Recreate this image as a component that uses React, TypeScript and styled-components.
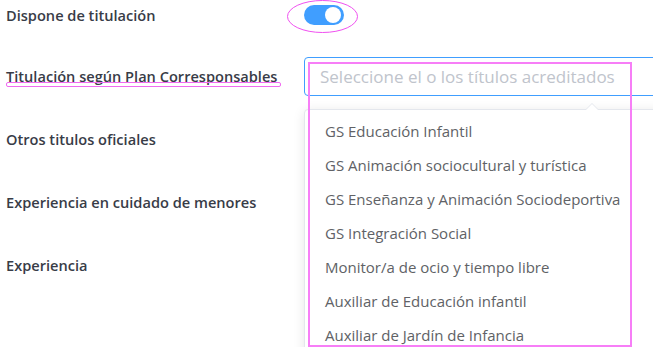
import React from "react";
import styled, { createGlobalStyle } from "styled-components";

const Global = createGlobalStyle`
  html, body { margin: 0; padding: 0; overflow: hidden; background: #fff; }
  body { font-family: "Open Sans", "Liberation Sans", sans-serif; }
`;

const Page = styled.div`
  position: relative;
  width: 653px;
  height: 347px;
  overflow: hidden;
  padding-left: 6px;
  box-sizing: border-box;
`;

const Row = styled.div<{ $compact?: boolean }>`
  display: grid;
  grid-template-columns: 298px 1fr;
  align-items: center;
  height: ${(p) => (p.$compact ? 30 : 40)}px;
  margin-bottom: ${(p) => (p.$compact ? 26 : 23)}px;
`;

const Label = styled.span`
  position: relative;
  justify-self: start;
  font-size: 14.6px;
  line-height: 20px;
  font-weight: 600;
  letter-spacing: 0;
  color: #383c47;
  white-space: nowrap;
`;

const Underline = styled.span`
  position: absolute;
  left: 0;
  right: -4px;
  bottom: -1px;
  height: 3px;
  border: 1px solid #f06af0;
  border-radius: 2px;
`;

const Control = styled.div`
  position: relative;
  height: 100%;
  display: flex;
  align-items: center;
`;

const Switch = styled.span`
  position: relative;
  width: 40px;
  height: 20px;
  border-radius: 10px;
  background: #409eff;
`;

const Knob = styled.span`
  position: absolute;
  top: 2px;
  right: 3px;
  width: 16px;
  height: 16px;
  border-radius: 50%;
  background: #fff;
`;

const Ellipse = styled.svg`
  position: absolute;
  left: -17px;
  top: 0;
  overflow: visible;
`;

const Select = styled.div`
  position: relative;
  width: 576px;
  height: 39px;
  box-sizing: border-box;
  border: 1px solid #409eff;
  border-radius: 4px;
  display: flex;
  align-items: center;
  padding-left: 15px;
  font-size: 17px;
  color: #c0c4cc;
  white-space: nowrap;
`;

const Dropdown = styled.ul`
  position: absolute;
  top: 51px;
  left: -1px;
  width: 576px;
  margin: 0;
  padding: 4px 0 6px;
  list-style: none;
  background: #fff;
  border: 1px solid #e4e7ed;
  border-radius: 4px;
  box-shadow: 0 2px 12px 0 rgba(0, 0, 0, 0.1);
  box-sizing: border-box;
  z-index: 2;
`;

const Arrow = styled.span`
  position: absolute;
  top: -7px;
  left: 281px;
  width: 0;
  height: 0;
  border-left: 6px solid transparent;
  border-right: 6px solid transparent;
  border-bottom: 6px solid #e4e7ed;
  &::after {
    content: "";
    position: absolute;
    left: -6px;
    top: 1px;
    border-left: 6px solid transparent;
    border-right: 6px solid transparent;
    border-bottom: 6px solid #fff;
  }
`;

const Item = styled.li`
  height: 34px;
  line-height: 34px;
  padding: 0 20px;
  font-size: 15px;
  color: #606266;
  white-space: nowrap;
`;

const Frame = styled.div`
  position: absolute;
  left: 308px;
  top: 62px;
  width: 324px;
  height: 285px;
  box-sizing: border-box;
  border: 2px solid #f77ef7;
  z-index: 3;
  pointer-events: none;
`;

const options = [
  "GS Educación Infantil",
  "GS Animación sociocultural y turística",
  "GS Enseñanza y Animación Sociodeportiva",
  "GS Integración Social",
  "Monitor/a de ocio y tiempo libre",
  "Auxiliar de Educación infantil",
  "Auxiliar de Jardín de Infancia",
];

export default function App() {
  return (
    <Page>
      <Global />
      <Row $compact>
        <Label>Dispone de titulación</Label>
        <Control>
          <Switch>
            <Knob />
          </Switch>
          <Ellipse width="72" height="34">
            <ellipse cx="35.5" cy="16.5" rx="35" ry="16" fill="none" stroke="#f050f0" strokeWidth="1" />
          </Ellipse>
        </Control>
      </Row>
      <Row>
        <Label>
          Titulación según Plan Corresponsables
          <Underline />
        </Label>
        <Control>
          <Select>
            Seleccione el o los títulos acreditados
            <Dropdown>
              <Arrow />
              {options.map((o) => (
                <Item key={o}>{o}</Item>
              ))}
            </Dropdown>
          </Select>
        </Control>
      </Row>
      <Row>
        <Label>Otros titulos oficiales</Label>
      </Row>
      <Row>
        <Label>Experiencia en cuidado de menores</Label>
      </Row>
      <Row>
        <Label>Experiencia</Label>
      </Row>
      <Frame />
    </Page>
  );
}
